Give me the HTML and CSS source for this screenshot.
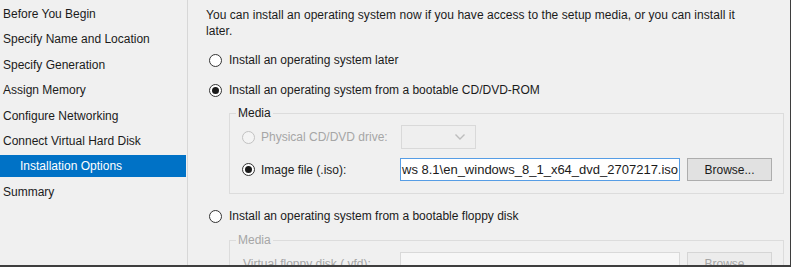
FILE: index.html
```html
<!DOCTYPE html>
<html lang="en">
<head>
<meta charset="utf-8">
<title>New Virtual Machine Wizard - Installation Options</title>
<link rel="stylesheet" href="styles.css">
</head>
<body>
<div class="window">
  <nav class="steps">
    <div class="step">Before You Begin</div>
    <div class="step">Specify Name and Location</div>
    <div class="step">Specify Generation</div>
    <div class="step">Assign Memory</div>
    <div class="step">Configure Networking</div>
    <div class="step">Connect Virtual Hard Disk</div>
    <div class="step active">Installation Options</div>
    <div class="step">Summary</div>
  </nav>
  <div class="divider"></div>
  <main class="content">
    <p class="intro">You can install an operating system now if you have access to the setup media, or you can install it<br>later.</p>

    <div class="option first"><span class="radio"></span><span>Install an operating system later</span></div>
    <div class="option second"><span class="radio checked"></span><span>Install an operating system from a bootable CD/DVD-ROM</span></div>

    <fieldset class="group">
      <legend>Media</legend>
      <div class="media-grid">
        <div class="sub-option disabled"><span class="radio disabled"></span><span>Physical CD/DVD drive:</span></div>
        <div class="combo">
          <svg class="chevron" width="12" height="8" viewBox="0 0 12 8"><polyline points="1.5,1.5 6,6 10.5,1.5" fill="none" stroke="#bdbdbd" stroke-width="1.4"/></svg>
        </div>
        <div></div>

        <div class="sub-option"><span class="radio checked"></span><span>Image file (.iso):</span></div>
        <div class="textbox focused"><span>ws 8.1\en_windows_8_1_x64_dvd_2707217.iso</span></div>
        <div class="button">Browse...</div>
      </div>
    </fieldset>

    <div class="option third"><span class="radio"></span><span>Install an operating system from a bootable floppy disk</span></div>

    <fieldset class="group group-disabled">
      <legend>Media</legend>
      <div class="media-grid">
        <div class="plain-label disabled">Virtual floppy disk (.vfd):</div>
        <div class="textbox disabled-box"></div>
        <div class="button disabled-btn">Browse...</div>
      </div>
    </fieldset>
  </main>
</div>
</body>
</html>
```

FILE: styles.css
```css
html, body {
  margin: 0;
  padding: 0;
  background: #ffffff;
}

body {
  font-family: "Liberation Sans", Arial, sans-serif;
  font-size: 12px;
  color: #1b1b1b;
}

.window {
  width: 790px;
  height: 265px;
  display: flex;
  background: #f0f0f0;
  overflow: hidden;
  border-right: 1px solid #3e3e3e;
  border-bottom: 2px solid #3e3e3e;
}

.steps {
  width: 186px;
  flex: none;
  padding-top: 3px;
  display: flex;
  flex-direction: column;
  gap: 3.4px;
}

.step {
  height: 22px;
  line-height: 22px;
  padding-left: 3px;
  white-space: nowrap;
}

.step.active {
  background: #0072c6;
  color: #ffffff;
  padding-left: 20px;
}

.divider {
  width: 1px;
  flex: none;
  margin-left: 1px;
  background: #d7d7d7;
}

.content {
  flex: 1;
  padding: 7px 0 0 18px;
  min-width: 0;
}

.intro {
  margin: 0;
  line-height: 16px;
  white-space: nowrap;
  letter-spacing: 0.05px;
}

.option {
  display: flex;
  align-items: center;
  gap: 7px;
  height: 20px;
  white-space: nowrap;
}

.option.first { margin-top: 11px; margin-left: 3px; }
.option.second { margin-top: 10px; margin-left: 3px; }
.option.third { margin-top: 12px; margin-left: 3px; }

.radio {
  position: relative;
  width: 13px;
  height: 13px;
  flex: none;
  box-sizing: border-box;
  border-radius: 50%;
  border: 1px solid #333333;
  background: #ffffff;
}

.radio.checked::after {
  content: "";
  position: absolute;
  left: 2px;
  top: 2px;
  width: 7px;
  height: 7px;
  border-radius: 50%;
  background: #1a1a1a;
}

.radio.disabled {
  border-color: #c2c2c2;
  background: #f4f4f4;
}

.group {
  margin: 5px 6px 0 23px;
  padding: 0 0 12px 12px;
  border: 1px solid #dcdcdc;
  min-inline-size: 0;
}

.group legend {
  margin-left: -6px;
  padding: 0 2px;
  line-height: 16px;
}

.group-disabled {
  margin-top: 6px;
}

.group-disabled legend {
  color: #a6a6a6;
}

.media-grid {
  display: grid;
  grid-template-columns: 151px 280px 85px;
  column-gap: 7px;
  row-gap: 9px;
  margin-top: 4px;
  align-items: center;
}

.sub-option {
  display: flex;
  align-items: center;
  gap: 6px;
  white-space: nowrap;
}

.disabled {
  color: #a6a6a6;
}

.plain-label {
  padding-left: 1px;
  white-space: nowrap;
}

.combo {
  width: 75px;
  height: 24px;
  margin-left: 1px;
  box-sizing: border-box;
  border: 1px solid #d9d9d9;
  background: #efefef;
  display: flex;
  align-items: center;
  justify-content: flex-end;
  padding-right: 9px;
}

.textbox {
  height: 23px;
  box-sizing: border-box;
  border: 1px solid #7eb4ea;
  background: #ffffff;
  display: flex;
  align-items: center;
  padding-left: 1px;
  overflow: hidden;
  white-space: nowrap;
  font-size: 13px;
}

.textbox.focused {
  border-color: #569de5;
}

.textbox.disabled-box {
  border-color: #d9d9d9;
  background: #f7f7f7;
}

.button {
  height: 23px;
  box-sizing: border-box;
  border: 1px solid #adadad;
  background: #e1e1e1;
  display: flex;
  align-items: center;
  justify-content: center;
}

.button.disabled-btn {
  border-color: #d5d5d5;
  background: #ececec;
  color: #a6a6a6;
}
```
